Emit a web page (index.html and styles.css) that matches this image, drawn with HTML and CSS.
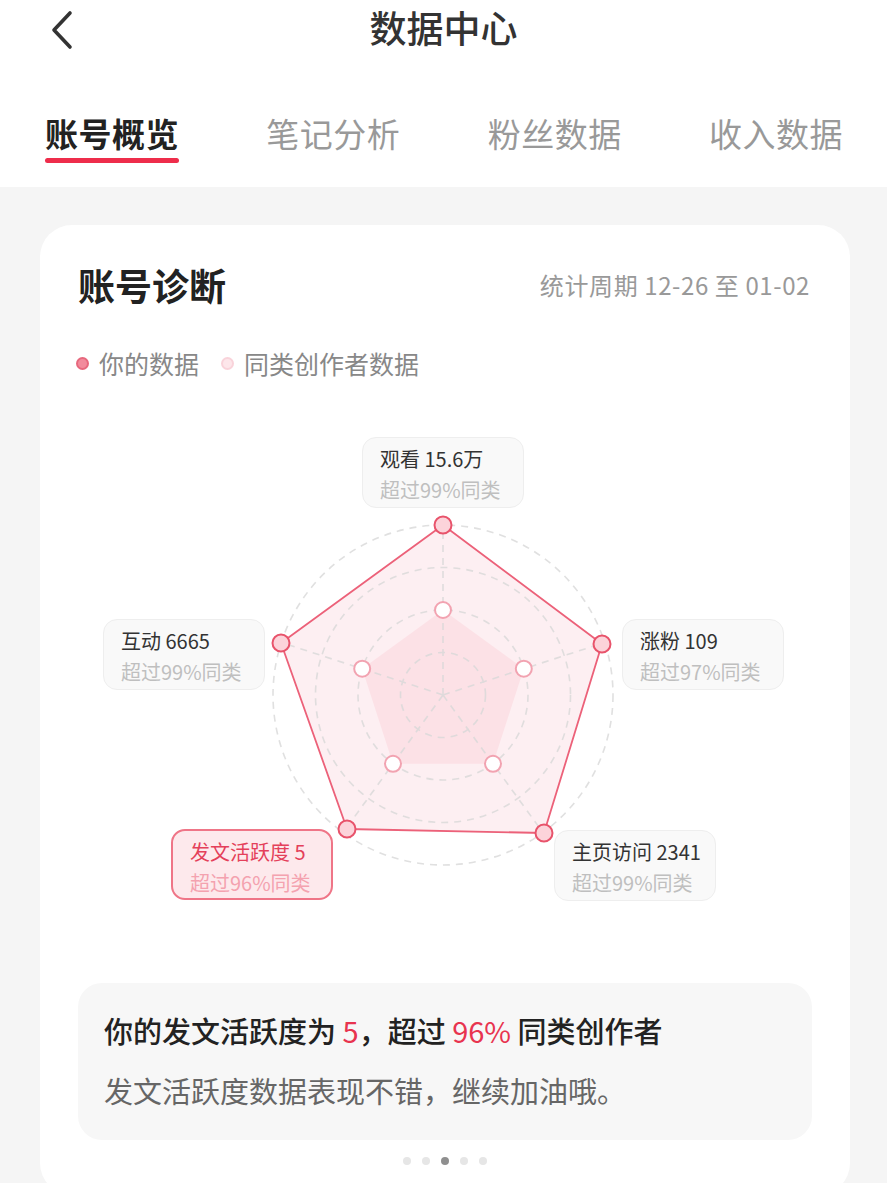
FILE: index.html
```html
<!DOCTYPE html>
<html lang="zh-CN">
<head>
<meta charset="utf-8">
<title>数据中心</title>
<link rel="stylesheet" href="styles.css">
</head>
<body>
<header class="top">
  <div class="nav">
    <div class="nav-left">
      <svg class="back" width="30" height="40" viewBox="0 0 30 40"><path d="M23 3 L7 20 L23 37" fill="none" stroke="#333" stroke-width="3.6" stroke-linecap="round" stroke-linejoin="round"/></svg>
    </div>
    <div class="nav-title">数据中心</div>
    <div class="nav-right"></div>
  </div>
  <nav class="tabs">
    <div class="tab active"><span class="tab-text">账号概览</span><span class="tab-line"></span></div>
    <div class="tab"><span class="tab-text">笔记分析</span><span class="tab-line"></span></div>
    <div class="tab"><span class="tab-text">粉丝数据</span><span class="tab-line"></span></div>
    <div class="tab"><span class="tab-text">收入数据</span><span class="tab-line"></span></div>
  </nav>
</header>
<main class="content">
  <section class="card">
    <div class="card-head">
      <h2 class="card-title">账号诊断</h2>
      <div class="period">统计周期 12-26 至 01-02</div>
    </div>
    <div class="legend">
      <span class="legend-item"><span class="ldot ldot-mine"></span>你的数据</span>
      <span class="legend-item"><span class="ldot ldot-peer"></span>同类创作者数据</span>
    </div>
    <div class="chart">
      <svg class="radar" width="810" height="560" viewBox="40 400 810 560">
        <polygon points="443,525 602,644 544,833 347,829 281,643" fill="#fdeff2" stroke="none"/>
        <polygon points="443,610 523.8,668.7 493,763.8 393,763.8 362.2,668.7" fill="#fce1e6" stroke="none"/>
        <g fill="none" stroke="#d9d9d9" stroke-width="1.6" stroke-dasharray="7 6" opacity="0.8">
          <circle cx="443" cy="695" r="42.5"/>
          <circle cx="443" cy="695" r="85"/>
          <circle cx="443" cy="695" r="127.5"/>
          <circle cx="443" cy="695" r="170"/>
          <line x1="443" y1="695" x2="443" y2="525"/>
          <line x1="443" y1="695" x2="604.7" y2="642.5"/>
          <line x1="443" y1="695" x2="542.9" y2="832.5"/>
          <line x1="443" y1="695" x2="343.1" y2="832.5"/>
          <line x1="443" y1="695" x2="281.3" y2="642.5"/>
        </g>
        <polygon points="443,525 602,644 544,833 347,829 281,643" fill="none" stroke="#ec6179" stroke-width="1.8" stroke-linejoin="round"/>
        <g fill="#ffffff" stroke="#f2a3b1" stroke-width="2">
          <circle cx="443" cy="610" r="8"/>
          <circle cx="523.8" cy="668.7" r="8"/>
          <circle cx="493" cy="763.8" r="8"/>
          <circle cx="393" cy="763.8" r="8"/>
          <circle cx="362.2" cy="668.7" r="8"/>
        </g>
        <g fill="#fcd3da" stroke="#e8536b" stroke-width="2">
          <circle cx="443" cy="525" r="8.5"/>
          <circle cx="602" cy="644" r="8.5"/>
          <circle cx="544" cy="833" r="8.5"/>
          <circle cx="347" cy="829" r="8.5"/>
          <circle cx="281" cy="643" r="8.5"/>
        </g>
      </svg>
      <div class="tip tip-top"><div class="tip-main">观看 15.6万</div><div class="tip-sub">超过99%同类</div></div>
      <div class="tip tip-left"><div class="tip-main">互动 6665</div><div class="tip-sub">超过99%同类</div></div>
      <div class="tip tip-right"><div class="tip-main">涨粉 109</div><div class="tip-sub">超过97%同类</div></div>
      <div class="tip tip-br"><div class="tip-main">主页访问 2341</div><div class="tip-sub">超过99%同类</div></div>
      <div class="tip tip-bl tip-active"><div class="tip-main">发文活跃度 5</div><div class="tip-sub">超过96%同类</div></div>
    </div>
    <div class="summary">
      <p class="summary-title">你的发文活跃度为 <em>5</em>，超过 <em>96%</em> 同类创作者</p>
      <p class="summary-desc">发文活跃度数据表现不错，继续加油哦。</p>
    </div>
    <div class="pager">
      <span class="pdot"></span><span class="pdot"></span><span class="pdot on"></span><span class="pdot"></span><span class="pdot"></span>
    </div>
  </section>
</main>
</body>
</html>
```
FILE: styles.css
```css
* { box-sizing: border-box; }
html, body { margin: 0; padding: 0; }
body {
  background: #f5f5f5;
  font-family: "Noto Sans CJK SC", "Noto Sans", "Liberation Sans", sans-serif;
  color: #333;
}
.top { background: #ffffff; }
.nav {
  height: 60px;
  padding-bottom: 6px;
  display: grid;
  grid-template-columns: 1fr auto 1fr;
  align-items: center;
}
.nav-left { padding-left: 47px; display: flex; align-items: center; padding-top: 6px; }
.back { display: block; }
.nav-title {
  font-size: 37px;
  font-weight: 500;
  color: #333;
  line-height: 54px;
}
.tabs {
  display: flex;
  justify-content: space-between;
  padding: 53px 44px 24px 45px;
}
.tab {
  display: flex;
  flex-direction: column;
  align-items: stretch;
}
.tab-text {
  font-size: 33px;
  line-height: 40px;
  color: #999;
  letter-spacing: 0.5px;
}
.tab-line {
  height: 5px;
  margin-top: 5px;
  border-radius: 3px;
  background: transparent;
}
.tab.active .tab-text { color: #222; font-weight: 700; }
.tab.active .tab-line { background: #ee2d4b; }

.content { padding: 38px 37px 0 40px; }
.card {
  background: #ffffff;
  border-radius: 32px;
  padding: 36px 0 30px 0;
}
.card-head {
  display: flex;
  justify-content: space-between;
  align-items: center;
  padding: 0 40px 0 38px;
  height: 48px;
}
.card-title {
  margin: 0;
  font-size: 37px;
  font-weight: 700;
  color: #222;
  line-height: 48px;
}
.period {
  font-size: 24px;
  letter-spacing: 0.6px;
  color: #999;
  line-height: 48px;
}
.legend {
  margin-top: 39px;
  padding-left: 36px;
  height: 30px;
  display: flex;
  align-items: center;
  gap: 22px;
}
.legend-item {
  display: flex;
  align-items: center;
  gap: 10px;
  font-size: 25px;
  line-height: 30px;
  color: #888;
}
.ldot {
  width: 13px;
  height: 13px;
  border-radius: 50%;
  display: inline-block;
}
.ldot-mine { background: #f28b9c; border: 2px solid #e7687d; }
.ldot-peer { background: #fde6ea; border: 2px solid #f9d3da; }

.chart {
  position: relative;
  margin-top: 22px;
  height: 560px;
}
.radar { display: block; }
.tip {
  position: absolute;
  width: 162px;
  height: 71px;
  padding: 5px 0 0 17px;
  background: #f9f9f9;
  border: 1.5px solid #eeeeee;
  border-radius: 14px;
}
.tip-main { font-size: 20px; line-height: 31px; color: #333; white-space: nowrap; }
.tip-sub { font-size: 20px; line-height: 31px; color: #bfbfbf; white-space: nowrap; }
.tip-top { left: 322px; top: 37px; }
.tip-left { left: 63px; top: 219px; }
.tip-right { left: 582px; top: 219px; }
.tip-br { left: 514px; top: 430px; }
.tip-bl { left: 131px; top: 429px; }
.tip-active {
  background: #fde9ec;
  border: 2px solid #ef7587;
}
.tip-active .tip-main { color: #e4405a; }
.tip-active .tip-sub { color: #f4a2af; }

.summary {
  margin: 23px 38px 0 38px;
  background: #f7f7f7;
  border-radius: 24px;
  padding: 27px 26px 30px 26px;
}
.summary p { margin: 0; }
.summary-title {
  font-size: 29px;
  line-height: 40px;
  font-weight: 500;
  color: #222;
}
.summary-title em {
  font-style: normal;
  font-weight: 400;
  color: #e8344f;
}
.summary-desc {
  margin-top: 20px !important;
  font-size: 29px;
  line-height: 40px;
  color: #666;
}
.pager {
  margin-top: 17px;
  display: flex;
  justify-content: center;
  gap: 11px;
}
.pdot {
  width: 8px;
  height: 8px;
  border-radius: 50%;
  background: #e6e6e6;
}
.pdot.on { background: #8f8f8f; }
```
